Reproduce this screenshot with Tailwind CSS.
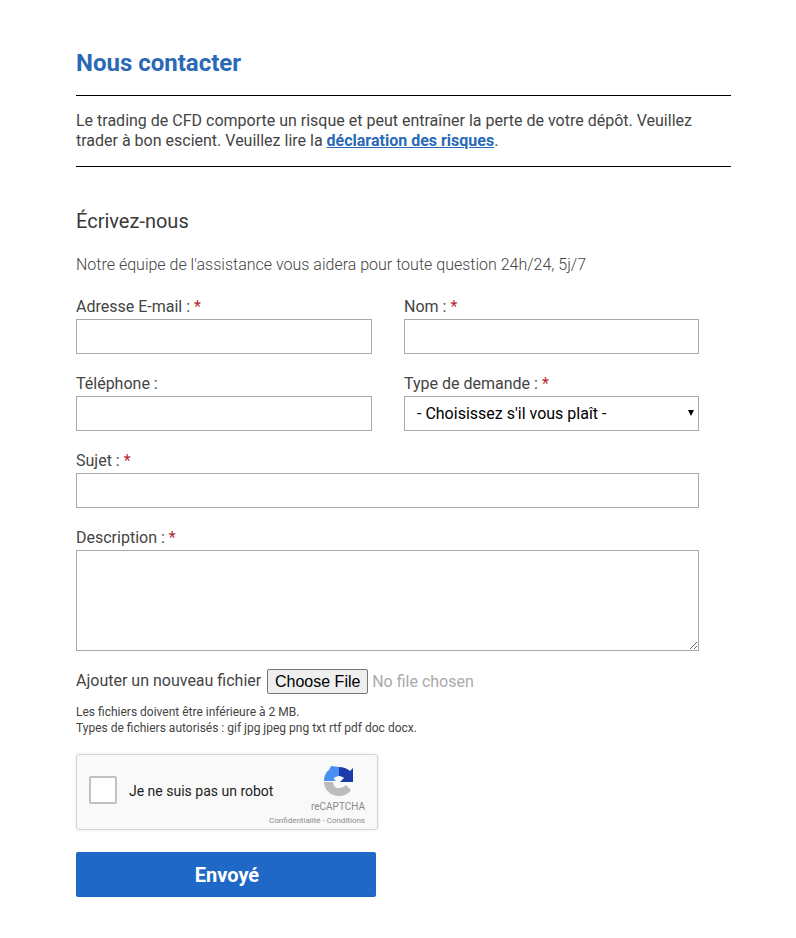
<!DOCTYPE html>
<html lang="fr">
<head>
    <meta charset="UTF-8">
    <meta name="viewport" content="width=device-width, initial-scale=1.0">
    <title>Nous contacter</title>
    <script src="https://cdn.jsdelivr.net/npm/@tailwindcss/browser@4"></script>
</head>
<body class="bg-white font-['Roboto',sans-serif] text-[#444]">
    <div class="w-[655px] ml-[76px] pt-[49px] pb-[41px]">
        <h1 class="text-[24px] leading-[29px] font-bold text-[#2a69b5]">Nous contacter</h1>

        <div class="mt-[17px] border-y border-black pt-[15px] pb-[15px] text-[16px] leading-[20px]">
            Le trading de CFD comporte un risque et peut entraîner la perte de votre dépôt. Veuillez trader à bon escient. Veuillez lire la <a href="#" class="font-bold text-[#2a69b5] underline">déclaration des risques</a>.
        </div>

        <h2 class="mt-[42px] text-[20px] leading-[24px] text-[#3a3a3a]">Écrivez-nous</h2>
        <p class="mt-[22px] text-[16px] leading-[20px] font-light text-[#444]">Notre équipe de l'assistance vous aidera pour toute question 24h/24, 5j/7</p>

        <form class="w-[623px] mt-[22px]">
            <div class="grid grid-cols-[296px_295px] gap-x-[32px] gap-y-[20px]">
                <div>
                    <label class="block text-[16px] leading-[20px] mb-[2px]">Adresse E-mail : <span class="text-[#b5282e]">*</span></label>
                    <input type="text" class="block w-full h-[35px] border border-[#aaa] bg-white">
                </div>
                <div>
                    <label class="block text-[16px] leading-[20px] mb-[2px]">Nom : <span class="text-[#b5282e]">*</span></label>
                    <input type="text" class="block w-full h-[35px] border border-[#aaa] bg-white">
                </div>
                <div>
                    <label class="block text-[16px] leading-[20px] mb-[2px]">Téléphone :</label>
                    <input type="text" class="block w-full h-[35px] border border-[#aaa] bg-white">
                </div>
                <div>
                    <label class="block text-[16px] leading-[20px] mb-[2px]">Type de demande : <span class="text-[#b5282e]">*</span></label>
                    <div class="relative">
                        <select class="block w-full h-[35px] border border-[#aaa] bg-white pl-[12px] text-[16px] text-black appearance-none">
                            <option>- Choisissez s'il vous plaît -</option>
                        </select>
                        <span class="absolute right-[5px] top-[14px] w-0 h-0 border-x-[3.5px] border-x-transparent border-t-[6px] border-t-black"></span>
                    </div>
                </div>
                <div class="col-span-2">
                    <label class="block text-[16px] leading-[20px] mb-[2px]">Sujet : <span class="text-[#b5282e]">*</span></label>
                    <input type="text" class="block w-full h-[35px] border border-[#aaa] bg-white">
                </div>
                <div class="col-span-2">
                    <label class="block text-[16px] leading-[20px] mb-[2px]">Description : <span class="text-[#b5282e]">*</span></label>
                    <textarea class="block w-full h-[101px] border border-[#aaa] bg-white"></textarea>
                </div>
            </div>

            <div class="flex items-center mt-[18px] h-[25px]">
                <label class="text-[16px] leading-[20px] mr-[6px] -mt-[2px]">Ajouter un nouveau fichier</label>
                <button type="button" class="h-[25px] w-[101px] border border-[#767676] rounded-[2px] bg-[#efefef] text-[16px] leading-[20px] text-black font-['Liberation_Sans',sans-serif]">Choose File</button>
                <span class="ml-[4px] text-[16px] leading-[20px] text-[#aaa]">No file chosen</span>
            </div>

            <p class="mt-[10px] text-[12px] leading-[16px] text-[#444]">Les fichiers doivent être inférieure à 2 MB.<br>Types de fichiers autorisés : gif jpg jpeg png txt rtf pdf doc docx.</p>

            <div class="relative mt-[18px] w-[302px] h-[76px] bg-[#f9f9f9] border border-[#d3d3d3] rounded-[3px] shadow-[0_0_4px_rgba(0,0,0,0.08)]">
                <div class="absolute left-[12px] top-[21px] w-[28px] h-[28px] bg-white border-2 border-[#c1c1c1] rounded-[2px]"></div>
                <span class="absolute left-[52px] top-[28px] text-[14px] leading-[17px] text-[#222]">Je ne suis pas un robot</span>
                <svg class="absolute left-[246px] top-[11px]" width="31" height="31" viewBox="0 0 31 31">
                    <path d="M1 16 H10 C10.5 20 12 22 16 22 C19 22 21 21 23 19 L28 24 C25 28 21 30 16 30 C8 30 1 24 1 16 Z" fill="#bcbcbc"/>
                    <path d="M1 15 C1 10 3 6 6 4 L8 0 L16 1 L16 10 C14 10 12 11 10.5 12.5 L13 15 Z" fill="#4a90f0"/>
                    <path d="M16 1 C20 1 24 2.5 27 5 L30 2 V16 H17 L21 12 C20 11 18 10 16 10 Z" fill="#1c3aa9"/>
                </svg>
                <span class="absolute right-[12px] top-[46px] text-[10px] leading-[12px] text-[#8a8a8a]">reCAPTCHA</span>
                <span class="absolute right-[12px] top-[61px] text-[8px] leading-[10px] text-[#8a8a8a]">Confidentialité - Conditions</span>
            </div>

            <button type="button" class="block mt-[22px] w-[300px] h-[45px] pl-[2px] bg-[#2068c6] rounded-[2px] text-white text-[20px] font-bold">Envoyé</button>
        </form>
    </div>
</body>
</html>
